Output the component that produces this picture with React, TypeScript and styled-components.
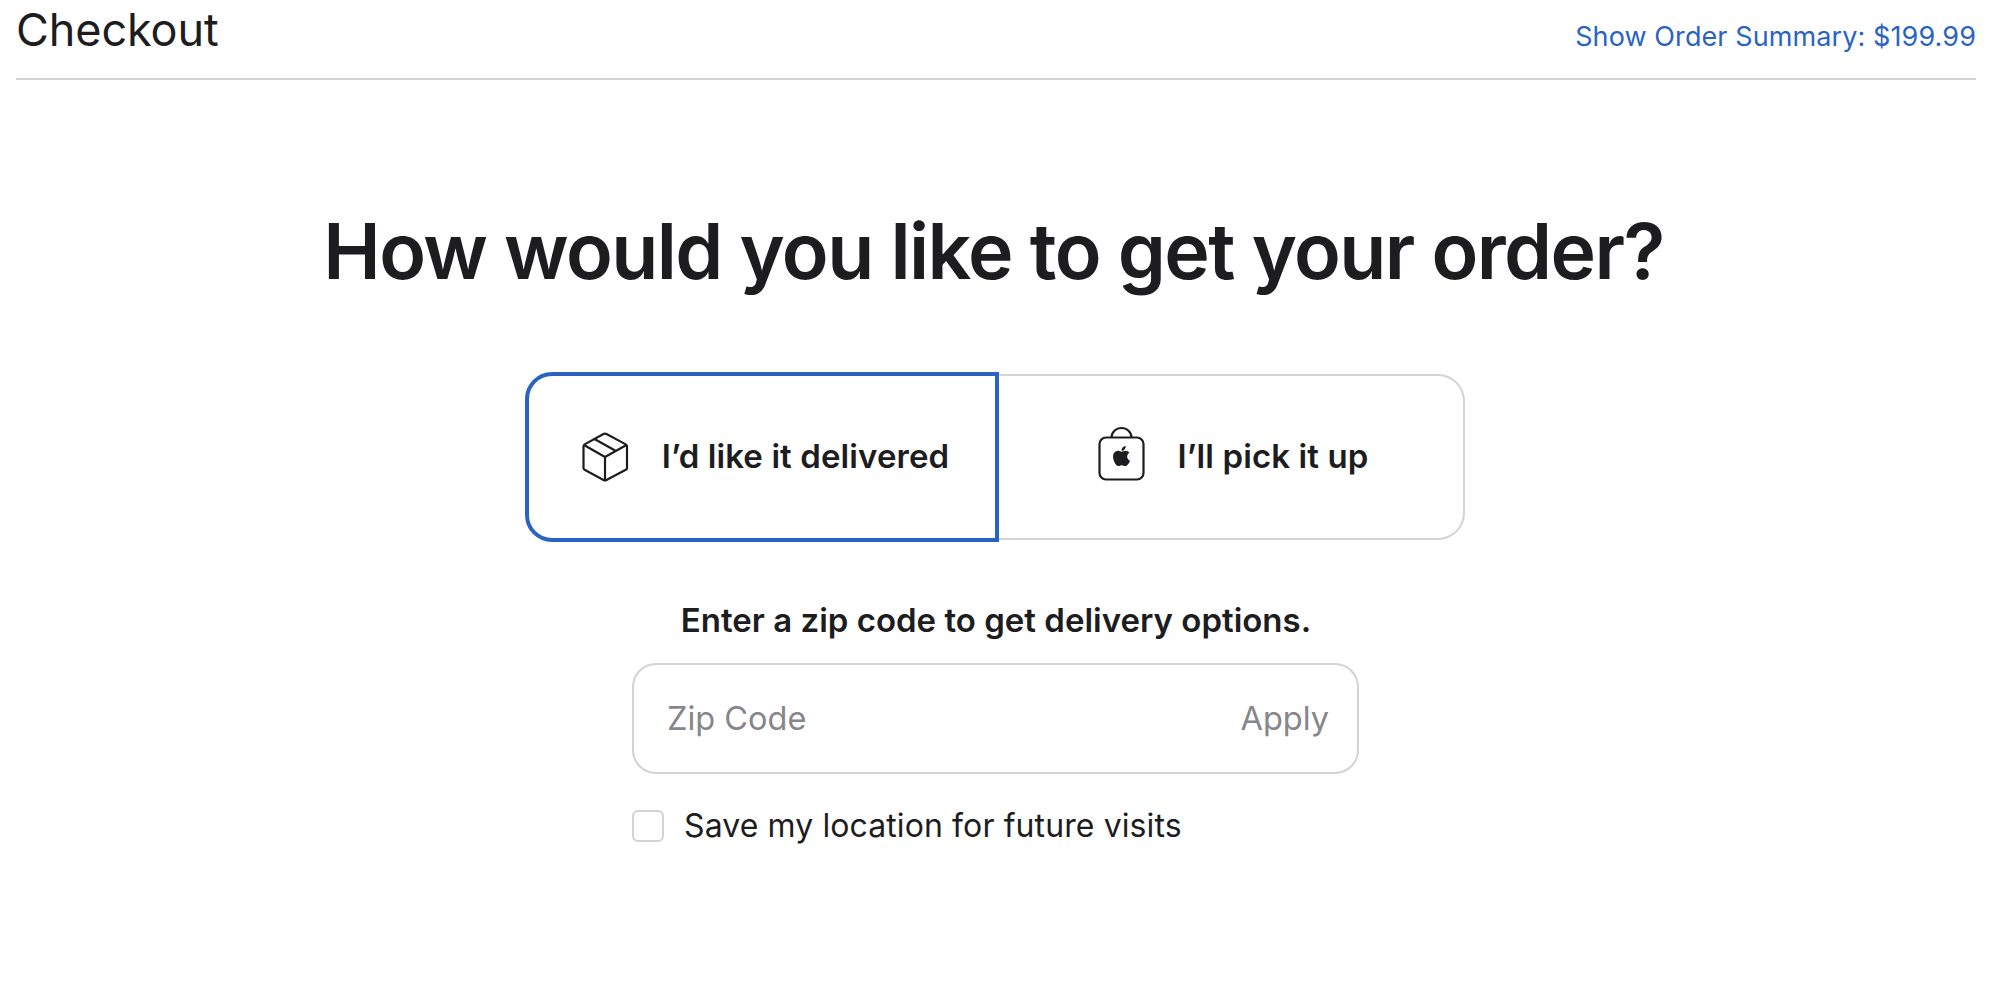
import React, { FC } from "react";
import styled, { createGlobalStyle } from "styled-components";
import { FaApple } from "react-icons/fa";

const GlobalStyle = createGlobalStyle`
  html, body {
    margin: 0;
    padding: 0;
    background: #fff;
    color: #1d1d1f;
    font-family: Inter, "Liberation Sans", sans-serif;
  }
`;

const BoxIcon: FC = () => (
  <svg width="50" height="54" viewBox="0 0 50 54" fill="none" stroke="#1d1d1f" strokeWidth="2.2" strokeLinejoin="round">
    <path d="M23.5 4 Q25 3.2 26.5 4 L45.8 14.4 Q47 15 47 16.4 V38 Q47 39.2 45.8 39.8 L26.5 50 Q25 50.8 23.5 50 L4.6 39.8 Q3.5 39.2 3.5 38 V16.4 Q3.5 15 4.6 14.4 Z" />
    <path d="M4 15 L25 27 L46.5 15 M25 27 V50.5 M14 8.8 L36 21" />
  </svg>
);

const BagIcon: FC = () => (
  <svg width="50" height="62" viewBox="0 0 50 62" fill="none" stroke="#1d1d1f" strokeWidth="2.2">
    <rect x="3.5" y="11.5" width="44" height="42" rx="6.5" />
    <path d="M15.5 11.5 A10 9.5 0 0 1 35.5 11.5" />
    <FaApple x="14" y="18.5" size={23} fill="#1d1d1f" stroke="none" />
  </svg>
);

const App: FC = () => (
  <Page>
    <GlobalStyle />
    <Header>
      <PageTitle>Checkout</PageTitle>
      <SummaryLink href="#">Show Order Summary: $199.99</SummaryLink>
    </Header>
    <Main>
      <Heading>How would you like to get your order?</Heading>
      <Segments>
        <Segment $selected>
          <IconSlot><BoxIcon /></IconSlot>
          <SegmentLabel>I’d like it delivered</SegmentLabel>
        </Segment>
        <Segment>
          <IconSlot><BagIcon /></IconSlot>
          <SegmentLabel>I’ll pick it up</SegmentLabel>
        </Segment>
      </Segments>
      <Prompt>Enter a zip code to get delivery options.</Prompt>
      <ZipForm>
        <ZipField>
          <ZipPlaceholder>Zip Code</ZipPlaceholder>
          <ZipPlaceholder>Apply</ZipPlaceholder>
        </ZipField>
        <SaveRow>
          <CheckBox />
          <SaveLabel>Save my location for future visits</SaveLabel>
        </SaveRow>
      </ZipForm>
    </Main>
  </Page>
);

const Page = styled.div`
  width: 2004px;
  height: 992px;
  overflow: hidden;
  box-sizing: border-box;
  padding: 0 28px 0 16px;
`;

const Header = styled.header`
  height: 80px;
  box-sizing: border-box;
  display: flex;
  justify-content: space-between;
  align-items: flex-start;
  border-bottom: 2px solid #d2d2d7;
`;

const PageTitle = styled.h1`
  margin: 0;
  padding-top: 3px;
  font-size: 45px;
  line-height: 54px;
  font-weight: 400;
  letter-spacing: -0.1px;
  color: #1d1d1f;
`;

const SummaryLink = styled.a`
  padding-top: 19px;
  font-size: 27px;
  line-height: 36px;
  letter-spacing: 0.1px;
  color: #2a63c4;
  text-decoration: none;
`;

const Main = styled.main`
  display: flex;
  flex-direction: column;
  align-items: center;
`;

const Heading = styled.h2`
  margin: 123px 5px 0 0;
  font-size: 77px;
  line-height: 96px;
  font-weight: 600;
  letter-spacing: -1.6px;
  white-space: nowrap;
`;

const Segments = styled.div`
  display: flex;
  align-items: center;
  margin: 73px 2px 0 0;
`;

const Segment = styled.div<{ $selected?: boolean }>`
  box-sizing: border-box;
  display: flex;
  align-items: center;
  justify-content: center;
  gap: 32px;
  ${(p) =>
    p.$selected
      ? `
    width: 474px;
    height: 170px;
    padding-left: 5px;
    border: 4px solid #2a63c4;
    border-radius: 27px 0 0 27px;
  `
      : `
    width: 466px;
    height: 166px;
    padding-left: 2px;
    border: 2px solid #d2d2d7;
    border-left: none;
    border-radius: 0 27px 27px 0;
  `}
`;

const IconSlot = styled.span`
  display: flex;
  width: 50px;
  justify-content: center;
`;

const SegmentLabel = styled.span`
  padding-bottom: 2px;
  font-size: 33px;
  line-height: 40px;
  font-weight: 600;
  letter-spacing: 0.1px;
  white-space: nowrap;
`;

const Prompt = styled.p`
  margin: 58px 0 0;
  font-size: 33px;
  line-height: 40px;
  font-weight: 600;
  white-space: nowrap;
`;

const ZipForm = styled.div`
  width: 727px;
  margin: 23px 1px 0 0;
`;

const ZipField = styled.div`
  box-sizing: border-box;
  height: 111px;
  display: flex;
  align-items: center;
  justify-content: space-between;
  padding: 0 28px 0 33px;
  border: 2px solid #d2d2d7;
  border-radius: 24px;
`;

const ZipPlaceholder = styled.span`
  font-size: 32.5px;
  line-height: 40px;
  color: #86868b;
`;

const SaveRow = styled.label`
  display: flex;
  align-items: center;
  gap: 20px;
  margin-top: 32px;
`;

const CheckBox = styled.span`
  box-sizing: border-box;
  width: 32px;
  height: 32px;
  border: 2px solid #d2d2d7;
  border-radius: 6px;
`;

const SaveLabel = styled.span`
  font-size: 32px;
  line-height: 40px;
  letter-spacing: 0.1px;
  white-space: nowrap;
`;

export default App;
